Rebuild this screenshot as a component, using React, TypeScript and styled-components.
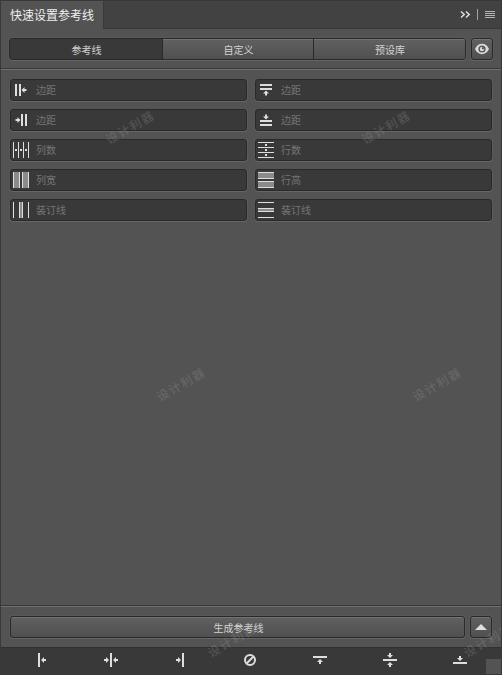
import React from 'react';
import styled, { createGlobalStyle, css } from 'styled-components';

const GlobalStyle = createGlobalStyle`
  *, *::before, *::after { box-sizing: border-box; }
  html, body { margin: 0; padding: 0; background: #535353; overflow: hidden; }
  body, button { font-family: "Noto Sans CJK SC", sans-serif; }
  button { padding: 0; margin: 0; border: 0; }
  svg { display: block; flex: none; overflow: visible; }
`;

const Panel = styled.div`
  position: relative;
  display: flex;
  flex-direction: column;
  width: 502px;
  height: 675px;
  overflow: hidden;
  border: 1px solid #383838;
  background: #535353;
`;

const TabBar = styled.header`
  display: flex;
  justify-content: space-between;
  height: 28px;
  flex: none;
`;

const PanelTab = styled.div`
  width: 102px;
  padding-left: 9px;
  color: #f0f0f0;
  font-size: 12px;
  line-height: 28px;
  white-space: nowrap;
`;

const TabBarRest = styled.div`
  display: flex;
  flex: 1;
  justify-content: flex-end;
  align-items: center;
  padding-right: 6px;
  border-left: 1px solid #383838;
  border-bottom: 1px solid #383838;
  background: #424242;
`;

const Section = styled.div<{ $height: number; $pad: string; $gap: number }>`
  display: flex;
  flex: none;
  height: ${p => p.$height}px;
  padding: ${p => p.$pad};
  gap: ${p => p.$gap}px;
`;

const raised = css`
  background: linear-gradient(#606060, #505050);
  box-shadow: inset 0 1px #737373;
`;

const Segments = styled.div`
  display: flex;
  width: 457px;
  height: 22px;
  overflow: hidden;
  border: 1px solid #292929;
  border-radius: 3px;
  box-shadow: 0 1px #656565, 0 0 0 1px rgba(255, 255, 255, 0.04);
`;

const Segment = styled.button<{ $width: number; $active?: boolean }>`
  width: ${p => p.$width}px;
  height: 20px;
  flex: none;
  padding: 1px 0 0 1px;
  font-size: 10px;
  line-height: 20px;
  color: #d4d4d4;
  ${p => (p.$active ? 'background: #393939;' : raised)}
  & + & { border-left: 1px solid #292929; }
`;

const Button = styled.button<{ $width: number }>`
  display: flex;
  flex: none;
  align-items: center;
  justify-content: center;
  width: ${p => p.$width}px;
  height: 22px;
  border: 1px solid #292929;
  border-radius: 3px;
  color: #d4d4d4;
  font-size: 10px;
  line-height: 20px;
  background: linear-gradient(#606060, #505050);
  box-shadow: 0 1px #656565, inset 0 1px #737373, 0 0 0 1px rgba(255, 255, 255, 0.04);
`;

const ButtonLabel = styled.span`
  padding: 1px 0 0 2px;
`;

const Divider = styled.div`
  flex: none;
  height: 2px;
  border-top: 1px solid #383838;
  border-bottom: 1px solid #717171;
`;

const Fields = styled.main`
  display: grid;
  flex: 1;
  grid-template-columns: 237px 237px;
  grid-auto-rows: 22px;
  gap: 8px;
  padding: 9px;
`;

const Field = styled.label`
  display: flex;
  align-items: center;
  gap: 7px;
  padding-left: 2px;
  border: 1px solid #292929;
  border-radius: 3px;
  background: #393939;
  box-shadow: 0 1px #666, 1px 0 #5c5c5c, -1px 0 #575757;
  color: #757575;
  font-size: 10px;
  line-height: 20px;
`;

const BottomBar = styled.footer`
  display: grid;
  flex: none;
  grid-template-columns: 69px 69px repeat(4, 70px) 18px;
  height: 27px;
  padding: 4px 0 0 32px;
  border-top: 1px solid #303030;
  background: #393939;
`;

const ResizeGrip = styled.div`
  position: absolute;
  right: 0;
  bottom: 0;
  width: 15px;
  height: 15px;
  background: #535353;
`;

const Watermark = styled.span<{ $x: number; $y: number }>`
  position: absolute;
  left: ${p => p.$x - 30}px;
  top: ${p => p.$y - 11}px;
  width: 60px;
  height: 20px;
  font-size: 12px;
  font-weight: 500;
  line-height: 20px;
  letter-spacing: 1.5px;
  text-align: center;
  white-space: nowrap;
  color: rgba(165, 165, 165, 0.26);
  transform: rotate(-30deg);
  pointer-events: none;
`;

const LIGHT = '#dedede';

type Direction = 'left' | 'right' | 'up' | 'down';
const angles: Record<Direction, number> = { left: 0, up: 90, right: 180, down: 270 };

/* Arrow whose tip sits at (x, y). */
const Arrow = ({ x, y, dir }: { x: number; y: number; dir: Direction }) => (
  <path
    d="M0 0L3-3V-1H5V1H3V3Z"
    fill={LIGHT}
    transform={`translate(${x} ${y}) rotate(${angles[dir]})`}
  />
);

type Kind = 'start' | 'end' | 'count' | 'size' | 'gutter';

/* Column variant of each icon; row icons swap the two axes. */
const columnShapes: Record<Kind, number[][]> = {
  start: [[2, 2, 2, 12], [6, 2, 2, 12]],
  end: [[8, 2, 2, 12], [12, 2, 2, 12]],
  count: [[0, 0, 1, 16], [5, 0, 1, 16], [10, 0, 1, 16], [15, 0, 1, 16], [2, 7, 2, 2], [7, 7, 2, 2], [12, 7, 2, 2]],
  size: [[0, 0, 1, 16], [1, 0, 5, 16, 1], [6, 0, 1, 16], [9, 0, 1, 16], [10, 0, 5, 16, 1], [15, 0, 1, 16]],
  gutter: [[0, 0, 1, 16], [6, 0, 1, 16], [7, 0, 2, 16, 1], [9, 0, 1, 16], [15, 0, 1, 16]],
};

const FieldIcon = ({ kind, row }: { kind: Kind; row?: boolean }) => (
  <svg width="16" height="16">
    <g transform={row ? 'matrix(0 1 1 0 0 0)' : undefined}>
      {columnShapes[kind].map(([x, y, w, h, shaded], i) => (
        <rect key={i} x={x} y={y} width={w} height={h} fill={shaded ? '#8b8b8b' : LIGHT} shapeRendering="crispEdges" />
      ))}
      {kind === 'start' && <Arrow x={8.5} y={8} dir="left" />}
      {kind === 'end' && <Arrow x={7.5} y={8} dir="right" />}
    </g>
  </svg>
);

const fields: { label: string; kind: Kind; row?: boolean }[] = [
  { label: '边距', kind: 'start' },
  { label: '边距', kind: 'start', row: true },
  { label: '边距', kind: 'end' },
  { label: '边距', kind: 'end', row: true },
  { label: '列数', kind: 'count' },
  { label: '行数', kind: 'count', row: true },
  { label: '列宽', kind: 'size' },
  { label: '行高', kind: 'size', row: true },
  { label: '装订线', kind: 'gutter' },
  { label: '装订线', kind: 'gutter', row: true },
];

const AlignIcon = ({ bar, arrows }: { bar: number[]; arrows: [number, number, Direction][] }) => (
  <svg width="18" height="16">
    <rect x={bar[0]} y={bar[1]} width={bar[2]} height={bar[3]} fill={LIGHT} />
    {arrows.map(([x, y, dir]) => <Arrow key={dir} x={x} y={y} dir={dir} />)}
  </svg>
);

const watermarks = [[129, 127], [385, 127], [180, 384], [436, 384], [231, 640], [487, 640]];

export default function App() {
  return (
    <>
      <GlobalStyle />
      <Panel>
        <TabBar>
          <PanelTab>快速设置参考线</PanelTab>
          <TabBarRest>
            <svg width="35" height="13" fill="none">
              <path d="M1 3.500L4.200 6.500L1 9.500M6 3.500L9.200 6.500L6 9.500" stroke="#dedede" strokeWidth="1.5" />
              <path d="M17.500 1V12" stroke="#a5a5a5" />
              <path d="M25 3.500H35M25 5.500H35M25 7.500H35M25 9.500H35" stroke="#b4b4b4" />
            </svg>
          </TabBarRest>
        </TabBar>

        <Section $height={39} $pad="9px 0 0 8px" $gap={5}>
          <Segments>
            <Segment $width={152} $active>参考线</Segment>
            <Segment $width={151}>自定义</Segment>
            <Segment $width={152}>预设库</Segment>
          </Segments>
          <Button $width={22} aria-label="显示">
            <svg width="14" height="10" viewBox="0 0 14 10">
              <path d="M0 5C1.500 1.600 4 -.2 7 -.2S12.500 1.600 14 5C12.500 8.400 10 10.200 7 10.200S1.500 8.400 0 5Z" fill="#dadada" />
              <circle cx="7" cy="5" r="3.600" fill="#555" />
              <circle cx="7" cy="5" r="2.200" fill="#dadada" />
              <circle cx="7.900" cy="4.200" r="1.100" fill="#555" />
            </svg>
          </Button>
        </Section>
        <Divider />

        <Fields>
          {fields.map((f, i) => (
            <Field key={i}>
              <FieldIcon kind={f.kind} row={f.row} />
              <span>{f.label}</span>
            </Field>
          ))}
        </Fields>

        <Divider />
        <Section $height={40} $pad="9px 0 0 9px" $gap={5}>
          <Button $width={455}><ButtonLabel>生成参考线</ButtonLabel></Button>
          <Button $width={22} aria-label="收起">
            <svg width="12" height="6"><path d="M6 0L12 6H0Z" fill="#dedede" /></svg>
          </Button>
        </Section>

        <BottomBar>
          <AlignIcon bar={[5, 1, 2, 14]} arrows={[[8, 8, 'left']]} />
          <AlignIcon bar={[8, 1, 2, 14]} arrows={[[7, 8, 'right'], [11, 8, 'left']]} />
          <AlignIcon bar={[11, 1, 2, 14]} arrows={[[10, 8, 'right']]} />
          <svg width="18" height="16" fill="none" stroke="#dedede" strokeWidth="2">
            <circle cx="9" cy="8" r="5" /><path d="M5.500 11.500L12.500 4.500" />
          </svg>
          <AlignIcon bar={[2, 4, 14, 2]} arrows={[[9, 7, 'up']]} />
          <AlignIcon bar={[2, 7, 14, 2]} arrows={[[9, 6, 'down'], [9, 10, 'up']]} />
          <AlignIcon bar={[2, 10, 14, 2]} arrows={[[9, 9, 'down']]} />
        </BottomBar>
        <ResizeGrip />
        {watermarks.map(([x, y]) => <Watermark key={`${x}-${y}`} $x={x} $y={y}>设计利器</Watermark>)}
      </Panel>
    </>
  );
}
